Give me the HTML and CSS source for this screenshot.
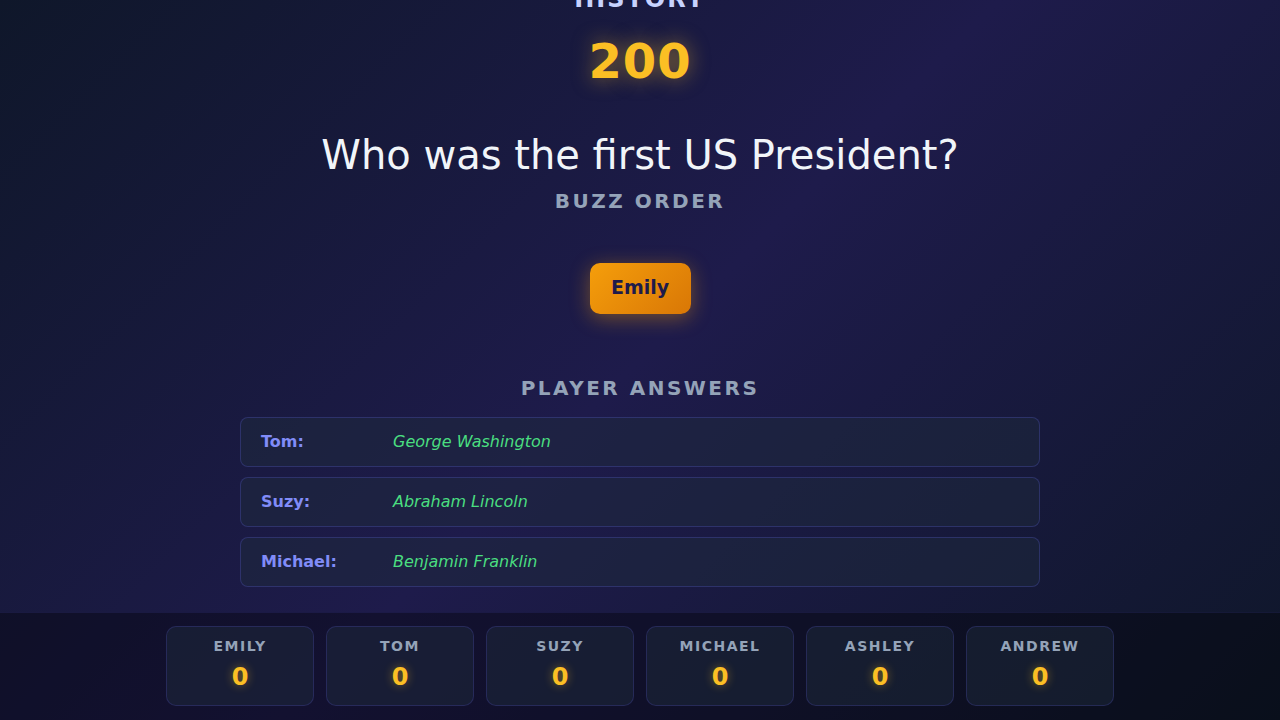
FILE: index.html
```html
<!DOCTYPE html>
<html lang="en">
<head>
<meta charset="utf-8">
<title>Buzzer Game</title>
<link rel="stylesheet" href="styles.css">
</head>
<body>
<div class="screen">
  <main class="stage">
    <div class="category">HISTORY</div>
    <div class="points">200</div>
    <h1 class="question">Who was the first US President?</h1>
    <h2 class="section-label buzz-label">BUZZ ORDER</h2>
    <div class="buzz-list">
      <div class="buzz-chip">Emily</div>
    </div>
    <h2 class="section-label answers-label">PLAYER ANSWERS</h2>
    <div class="answers">
      <div class="answer-row"><span class="answer-name">Tom:</span><span class="answer-text">George Washington</span></div>
      <div class="answer-row"><span class="answer-name">Suzy:</span><span class="answer-text">Abraham Lincoln</span></div>
      <div class="answer-row"><span class="answer-name">Michael:</span><span class="answer-text">Benjamin Franklin</span></div>
    </div>
  </main>
  <footer class="scoreboard">
    <div class="score-card"><div class="score-name">EMILY</div><div class="score-value">0</div></div>
    <div class="score-card"><div class="score-name">TOM</div><div class="score-value">0</div></div>
    <div class="score-card"><div class="score-name">SUZY</div><div class="score-value">0</div></div>
    <div class="score-card"><div class="score-name">MICHAEL</div><div class="score-value">0</div></div>
    <div class="score-card"><div class="score-name">ASHLEY</div><div class="score-value">0</div></div>
    <div class="score-card"><div class="score-name">ANDREW</div><div class="score-value">0</div></div>
  </footer>
</div>
</body>
</html>
```
FILE: styles.css
```css
* { box-sizing: border-box; }
html, body {
  margin: 0;
  padding: 0;
  height: 100%;
}
body {
  font-family: "DejaVu Sans", sans-serif;
  background: linear-gradient(135deg, #0f172a 0%, #1e1b4b 50%, #0f172a 100%);
  color: #f1f5f9;
  overflow: hidden;
}
.screen {
  height: 720px;
  display: flex;
  flex-direction: column;
}
.stage {
  height: 612px;
  display: flex;
  flex-direction: column;
  align-items: center;
  justify-content: flex-end;
  padding-bottom: 25px;
  overflow: hidden;
}
.category {
  font-size: 24px;
  font-weight: bold;
  letter-spacing: 2px;
  color: #c7d2fe;
  line-height: 28px;
}
.points {
  margin-top: 20px;
  font-size: 48px;
  font-weight: bold;
  color: #fbbf24;
  line-height: 56px;
  letter-spacing: 1px;
  text-shadow: 0 0 20px rgba(251, 191, 36, 0.5);
}
.question {
  margin: 41px 0 0;
  font-size: 40px;
  font-weight: normal;
  line-height: 50px;
  color: #f1f5f9;
}
.section-label {
  margin: 0;
  font-size: 20px;
  font-weight: bold;
  letter-spacing: 2.5px;
  color: #94a3b8;
  line-height: 24px;
}
.buzz-label { margin-top: 9px; }
.buzz-list {
  margin-top: 50px;
  display: flex;
  gap: 12px;
}
.buzz-chip {
  width: 101px;
  height: 51px;
  display: flex;
  align-items: center;
  justify-content: center;
  padding-bottom: 3px;
  border-radius: 10px;
  background: linear-gradient(135deg, #f59e0b 0%, #d97706 100%);
  color: #1e1b4b;
  font-size: 19px;
  font-weight: bold;
  box-shadow: 0 4px 20px rgba(245, 158, 11, 0.4);
}
.answers-label { margin-top: 62px; }
.answers {
  margin-top: 17px;
  width: 800px;
  display: flex;
  flex-direction: column;
  gap: 10px;
}
.answer-row {
  height: 50px;
  display: flex;
  align-items: center;
  padding: 0 20px 2px;
  border: 1px solid rgba(99, 102, 241, 0.25);
  border-radius: 8px;
  background: rgba(30, 41, 59, 0.5);
  font-size: 16px;
}
.answer-name {
  width: 132px;
  flex: none;
  font-weight: bold;
  color: #818cf8;
}
.answer-text {
  font-style: italic;
  color: #4ade80;
}
.scoreboard {
  height: 108px;
  display: flex;
  justify-content: center;
  gap: 12px;
  padding-top: 13px;
  background: rgba(0, 0, 0, 0.35);
  border-top: 1px solid rgba(99, 102, 241, 0.12);
}
.score-card {
  width: 148px;
  height: 80px;
  display: flex;
  flex-direction: column;
  align-items: center;
  padding-top: 11px;
  border: 1px solid rgba(99, 102, 241, 0.2);
  border-radius: 10px;
  background: rgba(30, 41, 59, 0.5);
}
.score-name {
  font-size: 14px;
  font-weight: bold;
  letter-spacing: 1.5px;
  color: #94a3b8;
  line-height: 17px;
}
.score-value {
  margin-top: 8px;
  font-size: 24px;
  font-weight: bold;
  color: #fbbf24;
  line-height: 28px;
  text-shadow: 0 0 10px rgba(251, 191, 36, 0.45);
}
```
